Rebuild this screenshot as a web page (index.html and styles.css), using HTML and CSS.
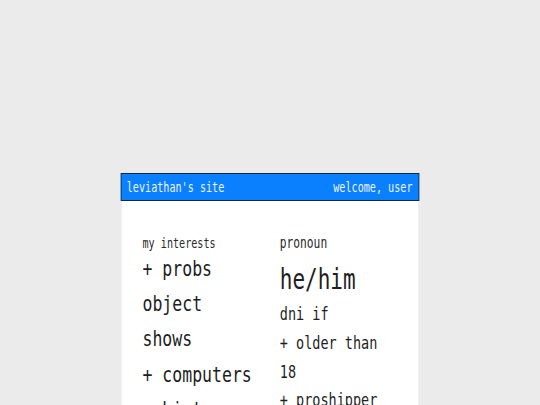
FILE: index.html
```html
<!DOCTYPE html>
<html lang="en">
<head>
<meta charset="utf-8">
<title>leviathan's site</title>
<link rel="stylesheet" href="styles.css">
</head>
<body>
<div class="card">
  <header class="bar">
    <span class="bar-title">leviathan's site</span>
    <span class="bar-user">welcome, user</span>
  </header>
  <main class="content">
    <section class="col">
      <h2 class="label">my interests</h2>
      <ul class="list list-big">
        <li>+ probs object shows</li>
        <li>+ computers</li>
        <li>+ history</li>
        <li>+ music</li>
      </ul>
    </section>
    <section class="col">
      <h2 class="label label-wide">pronoun</h2>
      <p class="pronoun">he/him</p>
      <ul class="list list-med">
        <li>dni if</li>
        <li>+ older than 18</li>
        <li>+ proshipper</li>
        <li>+ rude</li>
      </ul>
    </section>
  </main>
</div>
</body>
</html>
```

FILE: styles.css
```css
html, body {
  margin: 0;
  padding: 0;
}

body {
  background: #ebebeb;
  font-family: "DejaVu Sans Mono", "Liberation Mono", monospace;
  color: #1e1e1e;
}

/* the whole card is drawn in a narrow, condensed monospace look */
.card {
  box-sizing: border-box;
  width: 398px;
  margin: 173px auto 0;
  transform: scaleX(0.75);
  transform-origin: center top;
}

.bar {
  box-sizing: border-box;
  height: 28px;
  display: flex;
  align-items: center;
  justify-content: space-between;
  padding: 0 8px 0 7px;
  background: #0a80ff;
  border: 1px solid #14283c;
  color: #eef5ff;
  font-size: 13.5px;
}

.content {
  display: grid;
  grid-template-columns: 157px 157px;
  column-gap: 26px;
  align-items: start;
  padding: 34px 27px 40px 28px;
  background: #ffffff;
  border-left: 1px solid #e2e2e2;
  border-right: 1px solid #e2e2e2;
}

.col {
  min-width: 0;
}

.label {
  margin: 0;
  font-size: 13.5px;
  font-weight: normal;
  line-height: 16px;
  color: #2a2a2a;
}

.label-wide {
  font-size: 15px;
}

.list {
  list-style: none;
  margin: 0;
  padding: 0;
}

.list-big {
  font-size: 22px;
  line-height: 1.6;
}

.list-med {
  font-size: 18px;
  line-height: 1.6;
}

.pronoun {
  margin: 9px 0 0;
  font-size: 28px;
  line-height: 40px;
}
```
